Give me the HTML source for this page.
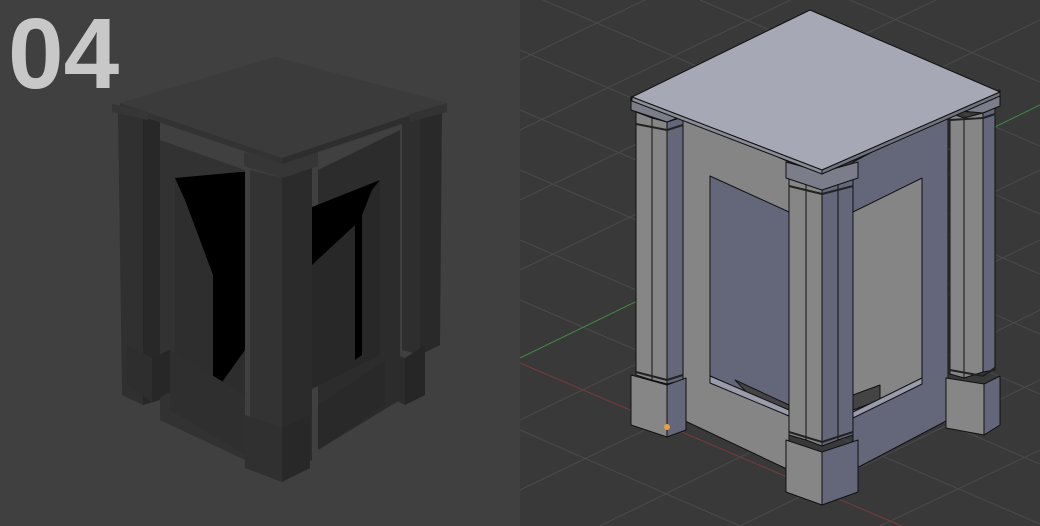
<!DOCTYPE html>
<html><head><style>
html,body{margin:0;padding:0;width:1040px;height:526px;overflow:hidden;background:#404040}
svg{display:block;overflow:hidden}
</style></head><body>
<svg width="1040" height="526" viewBox="0 0 1040 526" xmlns="http://www.w3.org/2000/svg">
<rect x="0" y="0" width="520" height="526" fill="#404040"/>
<rect x="520" y="0" width="520" height="526" fill="#393939"/>
<g stroke="#4a4a4a" stroke-width="1">
<line x1="520" y1="60" x2="1040" y2="-190"/>
<line x1="520" y1="130" x2="1040" y2="-120"/>
<line x1="520" y1="200" x2="1040" y2="-50"/>
<line x1="520" y1="270" x2="1040" y2="20"/>
<line x1="520" y1="420" x2="1040" y2="170"/>
<line x1="520" y1="490" x2="1040" y2="240"/>
<line x1="600" y1="526" x2="1040" y2="310"/>
<line x1="740" y1="526" x2="1040" y2="380"/>
<line x1="880" y1="526" x2="1040" y2="450"/>
<line x1="520" y1="-10" x2="1040" y2="214"/>
<line x1="520" y1="50" x2="1040" y2="274"/>
<line x1="520" y1="110" x2="1040" y2="334"/>
<line x1="520" y1="170" x2="1040" y2="394"/>
<line x1="520" y1="240" x2="1040" y2="464"/>
<line x1="520" y1="300" x2="1040" y2="524"/>
<line x1="520" y1="430" x2="740" y2="526"/>
<line x1="700" y1="0" x2="1040" y2="146"/>
<line x1="850" y1="0" x2="1040" y2="82"/>
</g>
<line x1="520" y1="358" x2="1040" y2="105" stroke="#3d8a3d" stroke-width="1"/>
<line x1="520" y1="363" x2="1040" y2="585" stroke="#7a3a3a" stroke-width="1"/>

<!-- LEFT MODEL -->
<text x="8" y="88" font-family="Liberation Sans, sans-serif" font-weight="bold" font-size="100" fill="#c8c8c8">04</text>
<polygon points="160,140 245,170 245,460 160,420" fill="#323232"/>
<polygon points="318,170 400,130 400,400 318,450" fill="#2c2c2c"/>
<polygon points="175,178 245,172 245,400 175,362" fill="#2e2e2e"/>
<polygon points="175,178 240,172 245,172 245,400 213,392 213,275 185,200" fill="#000"/>
<polygon points="310,210 380,180 380,355 310,390" fill="#282828"/>
<polygon points="312,207 380,180 372,190 362,215 362,355 355,360 355,225 312,265" fill="#000"/>
<polygon points="215,392 245,350 245,400" fill="#2d2d2d"/>
<polygon points="170,350 245,395 245,455 170,410" fill="#2f2f2f"/>
<polygon points="318,405 385,360 385,405 318,450" fill="#292929"/>
<!-- left pillar -->
<polygon points="118,112 143,118 143,405 122,395" fill="#303030"/>
<polygon points="143,118 160,120 160,400 143,405" fill="#282828"/>
<polygon points="127,345 152,358 152,402 127,385" fill="#2e2e2e"/>
<polygon points="152,358 170,350 170,392 152,402" fill="#272727"/>
<!-- right pillar -->
<polygon points="402,115 420,118 420,355 402,350" fill="#2e2e2e"/>
<polygon points="420,118 442,108 440,345 420,355" fill="#292929"/>
<polygon points="385,350 405,358 405,405 385,395" fill="#2c2c2c"/>
<polygon points="405,358 425,345 425,395 405,405" fill="#262626"/>
<!-- front pillar -->
<polygon points="250,170 282,178 282,475 250,462" fill="#333"/>
<polygon points="282,178 312,168 312,460 282,475" fill="#2b2b2b"/>
<polygon points="245,415 282,428 282,482 245,468" fill="#303030"/>
<polygon points="282,428 310,415 310,468 282,482" fill="#282828"/>
<polygon points="244,152 282,162 318,150 318,166 282,178 244,166" fill="#363636"/>
<!-- slab -->
<polygon points="120,103 275,57 447,103 282,158" fill="#3b3b3b"/>
<polygon points="120,103 282,158 282,164 120,109" fill="#333"/>
<polygon points="282,158 447,103 447,109 282,164" fill="#2e2e2e"/>
<polygon points="112,104 148,112 148,120 112,112" fill="#363636"/>
<polygon points="410,114 447,103 447,112 410,122" fill="#333"/>

<!-- RIGHT MODEL -->
<g stroke="#111" stroke-width="1" stroke-linejoin="round">
<polygon points="683,112 789,162 789,470 683,420" fill="#858585"/>
<polygon points="710,176 789,212 789,410 710,376" fill="#636779"/>
<polygon points="735,380 789,405 789,416 752,398" fill="#444"/>
<polygon points="710,376 789,410 789,416 710,383" fill="#9a9cac"/>
<polygon points="853,162 948,112 948,420 853,470" fill="#636779"/>
<polygon points="853,212 922,178 922,378 853,412" fill="#858585"/>
<polygon points="853,395 880,385 880,400 853,410" fill="#444"/>
<polygon points="853,412 922,378 922,384 853,418" fill="#9a9cac"/>
<!-- left pillar -->
<polygon points="636,112 652,118 652,380 636,375" fill="#868686"/>
<polygon points="652,118 667,122 667,384 652,380" fill="#868686"/>
<polygon points="667,122 683,117 683,380 667,384" fill="#636779"/>
<polygon points="631,375 667,385 667,437 631,425" fill="#868686"/>
<polygon points="667,385 686,378 686,430 667,437" fill="#636779"/>
<!-- right pillar -->
<polygon points="950,113 964,118 964,378 950,374" fill="#868686"/>
<polygon points="964,118 983,113 983,372 964,378" fill="#868686"/>
<polygon points="983,113 995,108 995,370 983,372" fill="#636779"/>
<polygon points="946,378 984,384 984,435 946,428" fill="#868686"/>
<polygon points="984,384 1000,376 1000,425 984,435" fill="#636779"/>
<!-- front pillar -->
<polygon points="789,178 806,183 806,440 789,435" fill="#868686"/>
<polygon points="806,183 822,188 822,446 806,440" fill="#868686"/>
<polygon points="822,188 838,183 838,440 822,446" fill="#636779"/>
<polygon points="838,183 853,178 853,435 838,440" fill="#636779"/>
<polygon points="786,440 822,452 822,505 786,492" fill="#868686"/>
<polygon points="822,452 858,440 858,492 822,505" fill="#636779"/>
<polygon points="786,162 822,172 858,162 858,178 822,190 786,178" fill="#7b7d8a"/>
<polygon points="631,97 667,105 685,100 685,115 667,122 631,110" fill="#7b7d8a"/>
<polygon points="950,100 1000,90 1000,106 983,113 950,110" fill="#7b7d8a"/>
<polygon points="632,97 810,10 1000,92 822,170" fill="#a6a8b6"/>
<polygon points="632,97 822,170 822,174 632,101" fill="#8a8c98"/>
<polygon points="822,170 1000,92 1000,96 822,174" fill="#70737f"/>
</g>
<g stroke="#222" stroke-width="2">
<line x1="636" y1="124" x2="667" y2="130"/><line x1="667" y1="130" x2="683" y2="125"/>
<line x1="789" y1="186" x2="822" y2="194"/><line x1="822" y1="194" x2="853" y2="186"/>
<line x1="950" y1="120" x2="983" y2="118"/><line x1="983" y1="118" x2="995" y2="114"/>
<line x1="636" y1="372" x2="667" y2="380"/><line x1="667" y1="380" x2="683" y2="375"/>
<line x1="789" y1="432" x2="822" y2="442"/><line x1="822" y1="442" x2="853" y2="432"/>
<line x1="950" y1="370" x2="983" y2="376"/><line x1="983" y1="376" x2="995" y2="368"/>
</g>
<circle cx="667" cy="427" r="3" fill="#e8a040"/>
</svg>
</body></html>
